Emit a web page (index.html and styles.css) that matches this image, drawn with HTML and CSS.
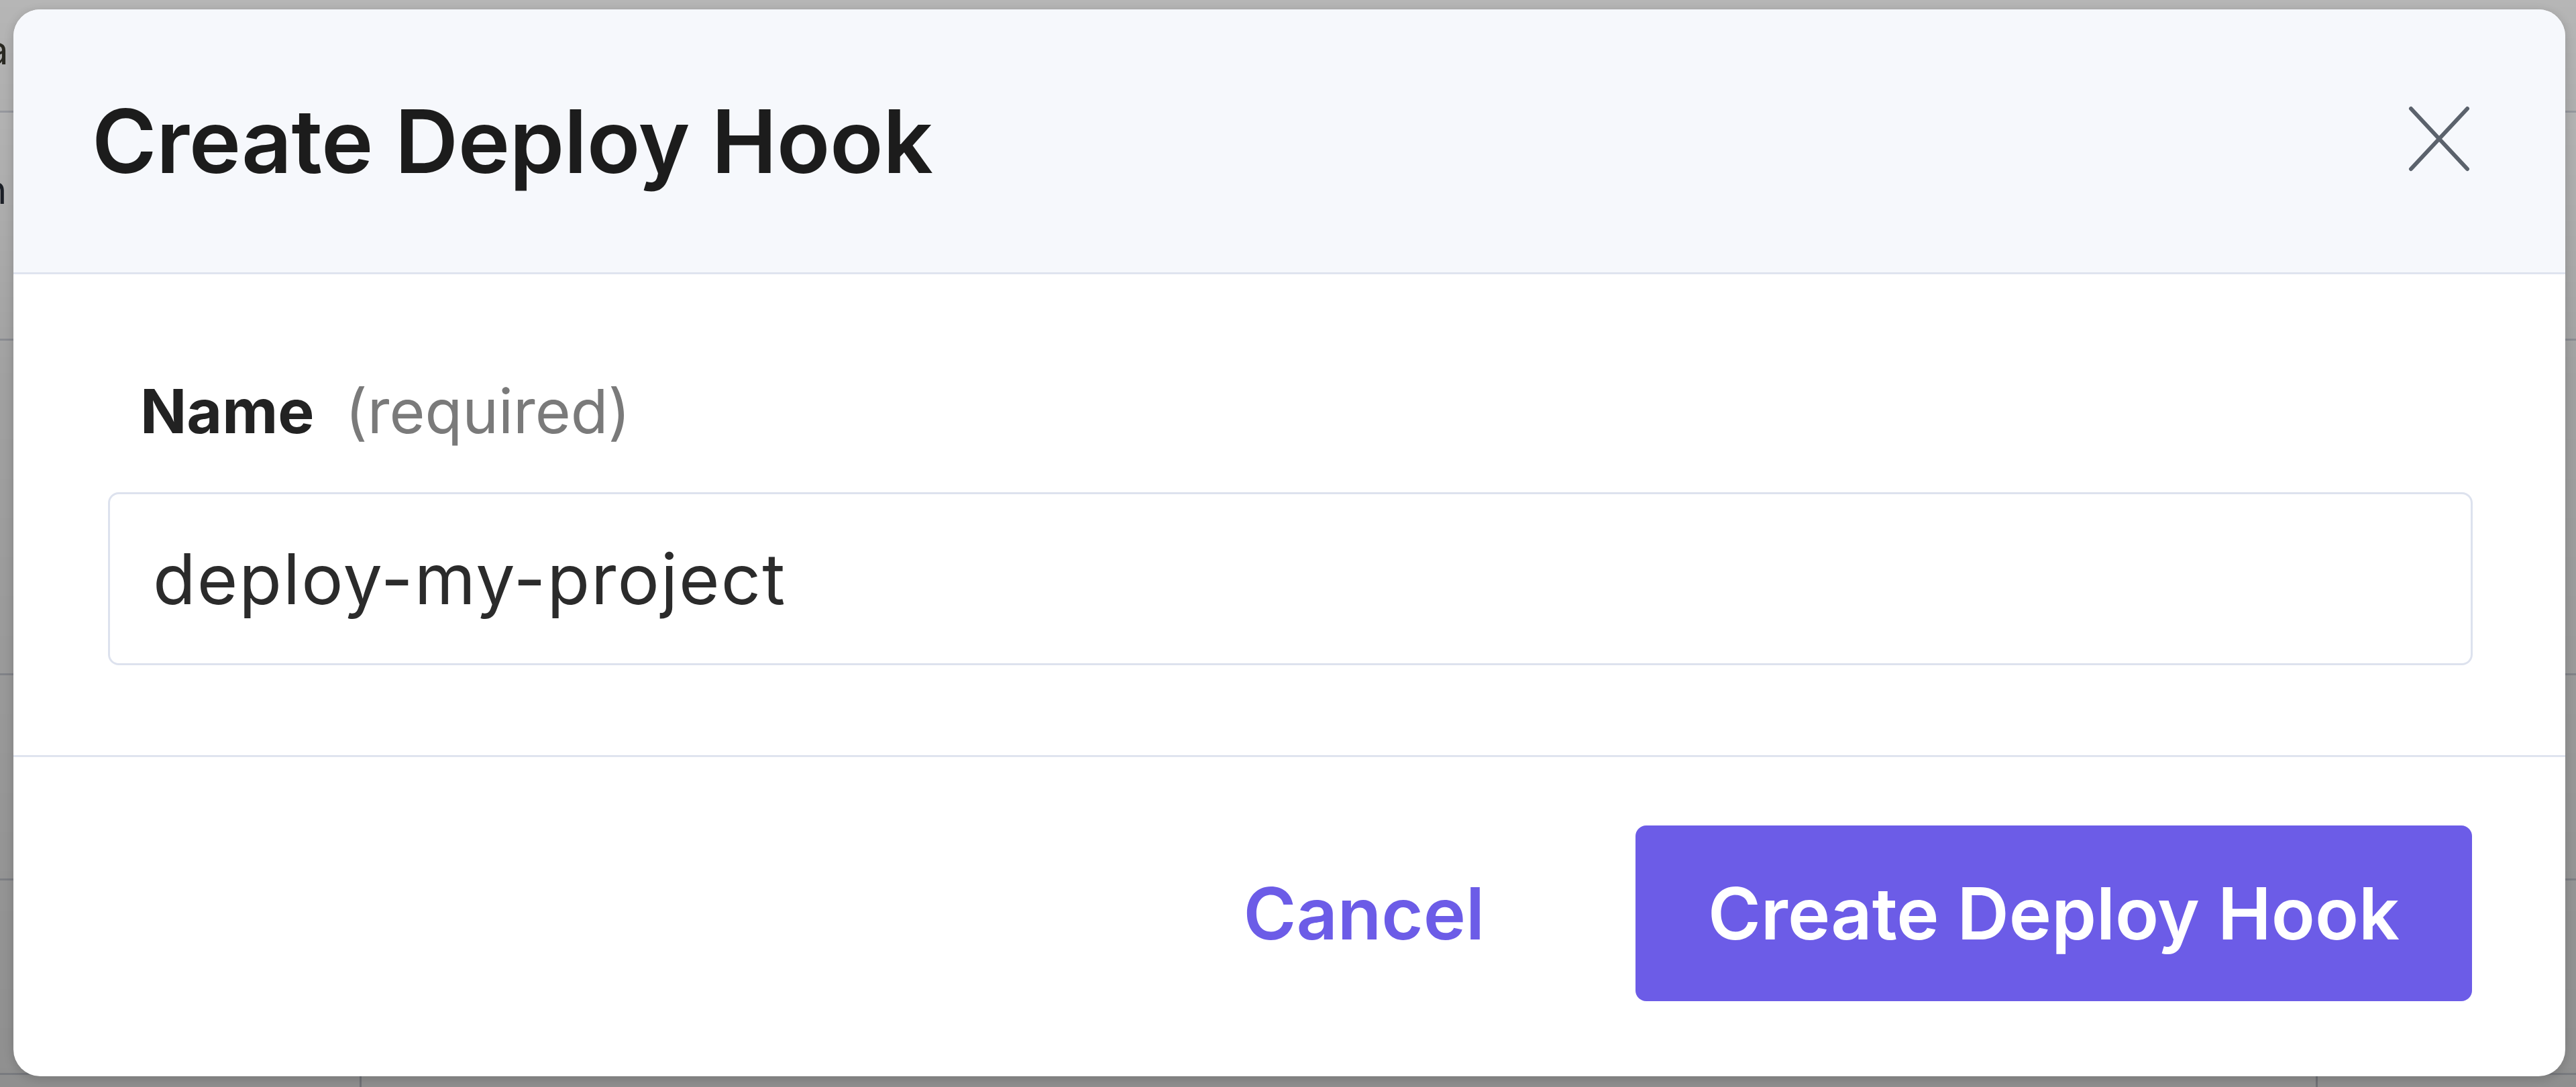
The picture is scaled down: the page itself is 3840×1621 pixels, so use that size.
FILE: index.html
```html
<!DOCTYPE html>
<html lang="en">
<head>
    <meta charset="UTF-8">
    <meta name="viewport" content="width=device-width, initial-scale=1.0">
    <title>Create Deploy Hook</title>
    <link rel="stylesheet" href="styles.css">
</head>
<body>
    <!-- page behind the dialog -->
    <div class="page">
        <div class="page-top"><span class="peek peek-a">a</span></div>
        <div class="page-row row-tall"><span class="peek">n</span></div>
        <div class="page-row row-mid"></div>
        <div class="page-row row-short"></div>
        <div class="page-row row-last"></div>
        <div class="table-head">
            <div class="col col-first"></div>
            <div class="col col-url">URL</div>
            <div class="col col-mod">Mod</div>
        </div>
    </div>

    <div class="overlay">
        <div class="modal" role="dialog" aria-labelledby="modal-title">
            <header class="modal-header">
                <h2 id="modal-title">Create Deploy Hook</h2>
                <button class="close-btn" aria-label="Close">
                    <svg viewBox="0 0 92 98" width="92" height="98">
                        <path d="M4 4 L88 94 M88 4 L4 94" stroke="#5b626c" stroke-width="6" stroke-linecap="round" fill="none"/>
                    </svg>
                </button>
            </header>

            <section class="modal-body">
                <label class="field-label" for="hook-name">
                    <span class="label-name">Name</span>
                    <span class="label-hint">(required)</span>
                </label>
                <input class="text-input" id="hook-name" type="text" value="deploy-my-project">
            </section>

            <footer class="modal-footer">
                <button class="btn-link">Cancel</button>
                <button class="btn-primary">Create Deploy Hook</button>
            </footer>
        </div>
    </div>
</body>
</html>
```

FILE: styles.css
```css
* { box-sizing: border-box; }
html, body { margin: 0; padding: 0; height: 100%; overflow: hidden; }
body { font-family: 'Inter', 'Noto Sans', sans-serif; background-color: #ffffff; color: #222; }

/* page under the backdrop */
.page { height: 1621px; overflow: hidden; }
.page-top { height: 168px; background-color: #fafafa; border-bottom: 3px solid #d6d9e2; padding-top: 40px; }
.page-row { border-bottom: 3px solid #d6d9e2; }
.row-tall { height: 340px; padding-top: 80px; }
.row-mid { height: 499px; }
.row-short { height: 306px; }
.row-last { height: 290px; }
.peek { display: inline-block; margin-left: -24px; font-size: 58px; color: #2a2f3a; }
.peek-a { margin-left: -20px; color: #3b3a30; }
.table-head { display: flex; font-weight: 700; font-size: 64px; color: #1d1d1d; }
.col { height: 120px; padding-top: 4px; }
.col-first { width: 539px; border-right: 3px solid #c9ccd4; }
.col-url { width: 2916px; padding-left: 138px; border-right: 3px solid #c9ccd4; }
.col-mod { flex: 1; padding-left: 136px; }

/* dialog */
.overlay { position: fixed; inset: 0; padding: 14px 16px 16px 20px; background: linear-gradient(rgba(0,0,0,0.27), rgba(0,0,0,0.37) 35%, rgba(0,0,0,0.44)); display: flex; }
.modal { flex: 1; display: flex; flex-direction: column; background-color: #fff; border-radius: 40px; overflow: hidden; box-shadow: 0 4px 18px rgba(0,0,0,0.18); }

.modal-header { height: 395px; flex-shrink: 0; display: flex; align-items: center; justify-content: space-between; padding: 0 142px 0 117px; background-color: #f6f8fc; border-bottom: 3px solid #dfe4ef; }
.modal-header h2 { margin: 0; font-size: 131px; font-weight: 600; color: #1c1c1c; letter-spacing: -0.5px; }
.close-btn { border: none; background: none; padding: 0; cursor: pointer; display: flex; margin-top: -6px; }

.modal-body { padding: 150px 138px 134px 141px; border-bottom: 3px solid #dfe4ef; }
.field-label { display: flex; align-items: baseline; gap: 46px; padding-left: 48px; margin-bottom: 66px; line-height: 1.2; font-size: 91px; }
.label-name { font-weight: 700; color: #222; }
.label-hint { font-weight: 400; color: #7a7a7a; }
.text-input { display: block; width: 100%; height: 258px; padding: 0 64px; border: 3px solid #dde2ee; border-radius: 16px; font-family: inherit; font-size: 104px; letter-spacing: 2px; color: #2b2b2b; background: #fff; outline: none; }

.modal-footer { flex: 1; display: flex; align-items: center; justify-content: flex-end; gap: 225px; padding: 0 139px 10px 0; }
.btn-link { border: none; background: none; padding: 0; font-family: inherit; font-size: 107px; font-weight: 600; color: #6c5ce7; cursor: pointer; }
.btn-primary { height: 262px; padding: 0 108px; border: none; border-radius: 16px; background-color: #6c5ce7; color: #fff; font-family: inherit; font-size: 107px; font-weight: 600; cursor: pointer; }
```
